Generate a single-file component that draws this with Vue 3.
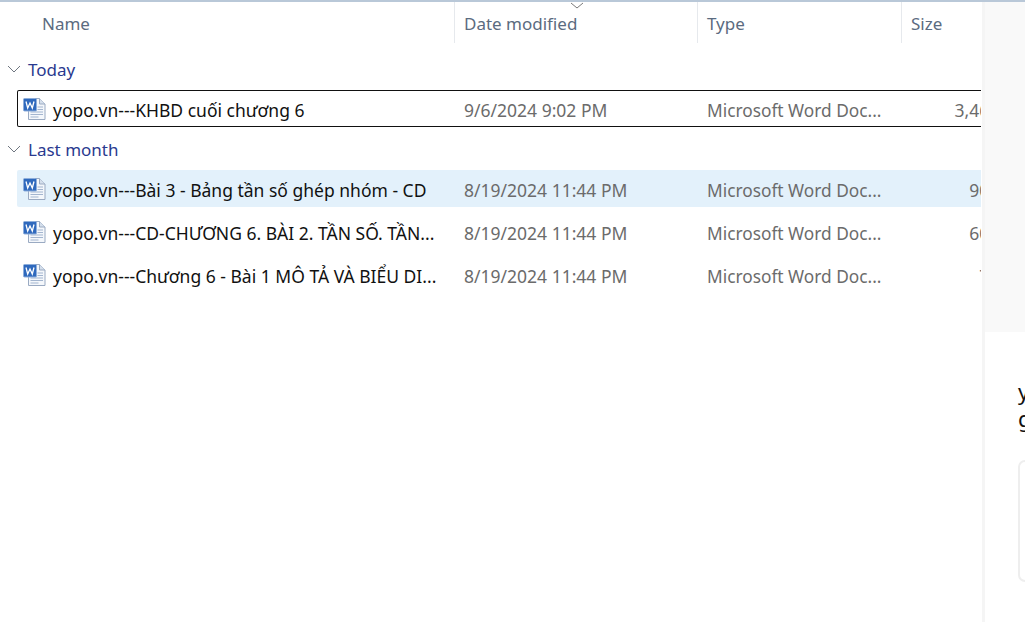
<template>
  <div class="window">
    <div class="explorer">
      <div class="head">
        <div class="col name-col">Name</div>
        <div class="col sep">
          <svg class="sort" width="14" height="7" viewBox="0 0 14 7"><path d="M1 1l6 5 6-5" fill="none" stroke="#7a7a7a" stroke-width="1" /></svg>
          Date modified
        </div>
        <div class="col sep">Type</div>
        <div class="col sep">Size</div>
      </div>

      <section v-for="group in groups" :key="group.title" class="group">
        <div class="group-title">
          <svg width="14" height="8" viewBox="0 0 14 8"><path d="M1 1l6 6 6-6" fill="none" stroke="#6f7680" stroke-width="1" /></svg>
          <span>{{ group.title }}</span>
        </div>
        <div
          v-for="file in group.files"
          :key="file.name"
          class="row"
          :class="file.state"
        >
          <div class="cell file-name">
            <svg class="doc" width="24" height="24" viewBox="0 0 24 24">
              <path d="M5.500 1.500h11l5.500 5.500v15.500h-16.500z" fill="#f4f7fb" stroke="#9aaac2" />
              <path d="M16.500 1.500v5.500h5.500" fill="#d5dfec" stroke="#9aaac2" />
              <path d="M14.500 10h5.500M14.500 12.500h5.500M7.500 15h12.500M7.500 17.500h12.500M7.500 20h8" stroke="#a3b5cf" stroke-width="1" />
              <rect x="0.500" y="1.500" width="13" height="12.500" rx="1" fill="#2f69bd" stroke="#8eaedb" />
              <path d="M3 4.500l1.700 6.500 2.300-5 2.300 5 1.700-6.500" fill="none" stroke="#fff" stroke-width="1.300" />
            </svg>
            <span class="label">{{ file.name }}</span>
          </div>
          <div class="cell meta">{{ file.date }}</div>
          <div class="cell meta type">Microsoft Word Doc...</div>
          <div class="cell meta size">{{ file.size }}</div>
        </div>
      </section>
    </div>

    <aside class="details">
      <div class="preview"></div>
      <div class="info">
        <div class="info-title">yopo.vn---Bài 3 - Bảng tần số ghép nhóm - CD</div>
        <div class="info-card"></div>
      </div>
    </aside>
  </div>
</template>

<script setup>
const groups = [
  {
    title: 'Today',
    files: [
      { name: 'yopo.vn---KHBD cuối chương 6', date: '9/6/2024 9:02 PM', size: '3,463 KB', state: 'focused' },
    ],
  },
  {
    title: 'Last month',
    files: [
      { name: 'yopo.vn---Bài 3 - Bảng tần số ghép nhóm - CD', date: '8/19/2024 11:44 PM', size: '906 KB', state: 'selected' },
      { name: 'yopo.vn---CD-CHƯƠNG 6. BÀI 2. TẦN SỐ. TẦN...', date: '8/19/2024 11:44 PM', size: '606 KB' },
      { name: 'yopo.vn---Chương 6 - Bài 1 MÔ TẢ VÀ BIỂU DI...', date: '8/19/2024 11:44 PM', size: '75 KB' },
    ],
  },
]
</script>

<style>
html,
body {
  margin: 0;
  background: #fff;
}
</style>

<style scoped>
.window {
  display: flex;
  width: 1025px;
  height: 622px;
  overflow: hidden;
  box-sizing: border-box;
  border-top: 2px solid #b9c8d8;
  font-family: "Noto Sans", "Open Sans", sans-serif;
  font-size: 17px;
}

.explorer {
  width: 981px;
  flex: none;
  overflow: hidden;
}

.head {
  display: grid;
  grid-template-columns: 454px 243px 204px 124px;
  height: 41px;
  color: #5b6b80;
}

.col {
  position: relative;
  display: flex;
  align-items: center;
  box-sizing: border-box;
  padding-left: 10px;
  padding-top: 2px;
}

.name-col {
  padding-left: 42px;
}

.sep {
  border-left: 1px solid #e6e9ed;
  padding-left: 9px;
}

.sort {
  position: absolute;
  top: 0;
  left: 115px;
}

.group:first-of-type {
  margin-top: 10px;
}

.group-title {
  display: flex;
  align-items: center;
  height: 32px;
  padding-bottom: 5px;
  padding-left: 7px;
  gap: 7px;
  color: #2a3a8f;
}

.row {
  display: grid;
  grid-template-columns: 437px 243px 204px 125px;
  align-items: center;
  width: 1009px;
  height: 37px;
  box-sizing: border-box;
  margin-left: 17px;
  margin-bottom: 6px;
  padding-top: 3px;
  border-radius: 2px;
  color: #6b6b6b;
  font-size: 17.5px;
}

.row.focused {
  box-shadow: inset 0 0 0 1px #111;
}

.row.selected {
  background: #e3f1fb;
}

.cell {
  white-space: nowrap;
}

.file-name {
  display: flex;
  align-items: center;
  padding-left: 6px;
  gap: 6px;
  color: #111;
}

.doc {
  flex: none;
  margin-top: -2px;
}

.meta {
  padding-left: 10px;
}

.type {
  font-size: 17.3px;
}

.size {
  padding: 0;
  text-align: right;
}

.details {
  flex: 1;
  display: flex;
  flex-direction: column;
  min-width: 0;
  overflow: hidden;
  border-left: 3px solid #f5f5f5;
  margin-left: 1px;
}

.preview {
  height: 330px;
  flex: none;
  background: #f9f9f9;
}

.info {
  flex: 1;
  padding: 46px 0 0 33px;
}

.info-title {
  width: 300px;
  font-size: 22px;
  line-height: 27px;
  color: #111;
}

.info-card {
  width: 300px;
  height: 122px;
  box-sizing: border-box;
  margin-top: 28px;
  border: 2px solid #eeeeee;
  border-radius: 7px;
}
</style>
